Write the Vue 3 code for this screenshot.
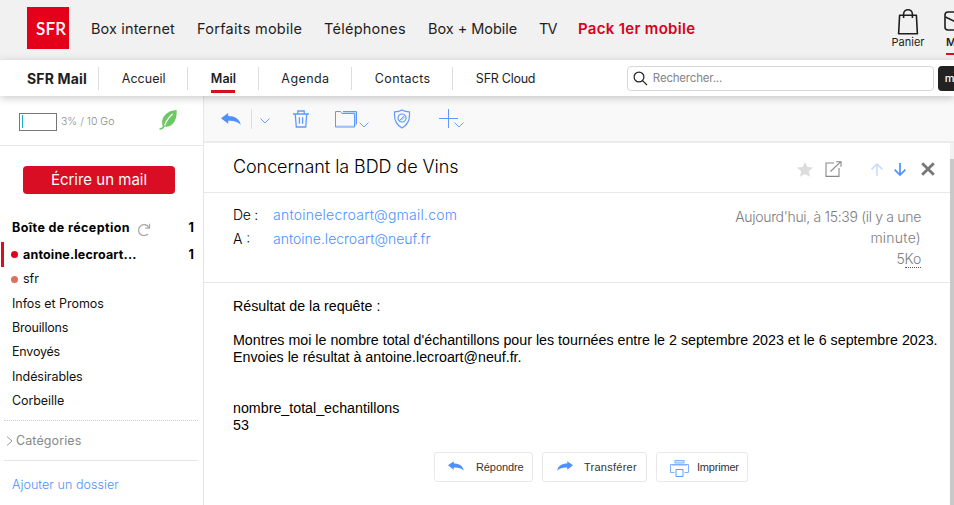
<script setup>
const shopLinks = [
  { label: 'Box internet', cls: 'w-box' },
  { label: 'Forfaits mobile', cls: 'w-forfaits' },
  { label: 'Téléphones', cls: 'w-tel' },
  { label: 'Box + Mobile', cls: 'w-boxmob' },
  { label: 'TV', cls: 'w-tv' },
  { label: 'Pack 1er mobile', cls: 'w-pack' },
]
const tabs = [
  { label: 'Accueil', cls: 't-accueil' },
  { label: 'Mail', cls: 't-mail' },
  { label: 'Agenda', cls: 't-agenda' },
  { label: 'Contacts', cls: 't-contacts' },
  { label: 'SFR Cloud', cls: 't-cloud' },
]
const folders = [
  { label: 'Infos et Promos', cls: 'f-infos' },
  { label: 'Brouillons', cls: 'f-brouillons' },
  { label: 'Envoyés', cls: 'f-envoyes' },
  { label: 'Indésirables', cls: 'f-indes' },
  { label: 'Corbeille', cls: 'f-corbeille' },
]
</script>

<template>
  <div class="page">
    <header class="shop">
      <div class="logo"><span>SFR</span></div>
      <nav class="shop-nav">
        <a v-for="l in shopLinks" :key="l.label" :class="l.cls"><span>{{ l.label }}</span></a>
      </nav>
      <div class="account">
        <div class="cart">
          <svg width="22" height="28" viewBox="0 0 22 28" fill="none" stroke="#1e1e1e" stroke-width="1.6" stroke-linejoin="round">
            <path d="M2.6 7.2h16.8l1 18.6H1.6z" />
            <path d="M6.6 10V6.200c0-6 8.800-6 8.800 0V10" />
          </svg>
          <span>Panier</span>
        </div>
        <div class="mails">
          <svg width="26" height="20" viewBox="0 0 26 20" fill="none" stroke="#1e1e1e" stroke-width="1.6">
            <rect x="1" y="1" width="24" height="18" rx="3" />
            <path d="M1.500 6l11.500 5.500L24.500 6" />
          </svg>
          <span>M</span>
        </div>
      </div>
    </header>

    <div class="tabs">
      <b class="brand"><span>SFR Mail</span></b>
      <div v-for="t in tabs" :key="t.label" class="tab" :class="t.cls"><span>{{ t.label }}</span></div>
      <div class="search">
        <svg width="15" height="15" viewBox="0 0 15 15" fill="none" stroke="#222" stroke-width="1.200">
          <circle cx="6" cy="6" r="4.900" /><path d="M9.600 9.600L14 14" />
        </svg>
        <span>Rechercher...</span>
      </div>
      <div class="search-go">m</div>
    </div>

    <div class="body">
      <aside class="side">
        <div class="quota">
          <div class="gauge"><i></i></div>
          <span>3% / 10 Go</span>
          <svg width="19" height="21" viewBox="0 0 19 21">
            <path d="M3.600 17.200C1 9 7.500 1.500 17.600 1c.8 8.500-3 17.500-11.600 16.600z" fill="#6cc864" />
            <path d="M1 20c3 0 3.500-2 5-4" fill="none" stroke="#6cc864" stroke-width="1.500" stroke-linecap="round" />
            <path d="M5.500 16.500c2-5 4.500-8.500 8.200-11.500" fill="none" stroke="#fff" stroke-width="1.100" />
          </svg>
        </div>
        <div class="compose"><span>Écrire un mail</span></div>
        <div class="row inbox">
          <b>Boîte de réception</b>
          <svg width="14" height="14" viewBox="0 0 14 14" fill="none" stroke="#aaa" stroke-width="1.300">
            <path d="M11 11A5.500 5.500 0 1 1 11.800 4.300M12.500.8v4.300H8.200" />
          </svg>
          <b class="count">1</b>
        </div>
        <div class="row current"><i class="dot"></i><b>antoine.lecroart...</b><b class="count">1</b></div>
        <div class="row sfr"><i class="dot"></i><span>sfr</span></div>
        <div v-for="f in folders" :key="f.label" class="row folder" :class="f.cls"><span>{{ f.label }}</span></div>
        <div class="cats">
          <svg width="7" height="10" viewBox="0 0 7 10" fill="none" stroke="#999" stroke-width="1"><path d="M1 .5l5 4.500-5 4.500" /></svg>
          <span>Catégories</span>
        </div>
        <a class="add">Ajouter un dossier</a>
      </aside>

      <main class="main">
        <div class="toolbar">
          <svg class="i-reply" width="20" height="12" viewBox="0 0 20 12"><path d="M0 5.200L7.200 0v3C14 3 18.500 6 19.800 11.800 16.500 8.400 12.500 7.500 7.200 7.800v2.900z" fill="#4d90fe" /></svg>
          <i class="bar"></i>
          <svg class="i-chev" width="10" height="6" viewBox="0 0 10 6" fill="none" stroke="#6ca4fb"><path d="M.5.5L5 5 9.500.5" /></svg>
          <svg class="i-trash" width="16" height="18" viewBox="0 0 16 18" fill="none" stroke="#5e9afd" stroke-width="1.300">
            <path d="M0 4h16M4.800 3.500V1h6.400v2.500M2.300 4.500l1 12.500h9.400l1-12.500M6.400 7.300v6.400M9.600 7.300v6.400" />
          </svg>
          <svg class="i-folder" width="24" height="18" viewBox="0 0 24 18" fill="none" stroke="#5e9afd">
            <path d="M.5 17V1.500h5l1.500 2h12.500V17z" /><path d="M8 1.500h13.500v13" /><path d="M8 2.500h13M20.500 3v13M1 16h18" opacity=".4" />
          </svg>
          <svg class="i-chev2" width="10" height="6" viewBox="0 0 10 6" fill="none" stroke="#6ca4fb"><path d="M.5.5L5 5 9.500.5" /></svg>
          <svg class="i-shield" width="18" height="20" viewBox="0 0 18 20" fill="none" stroke="#5e9afd" stroke-width="1.200">
            <path d="M9 1c2.500 1.500 4.800 1.900 7.400 1.900C17.200 11 15 16 9 19 3 16 .8 11 1.600 2.900 4.200 2.900 6.500 2.500 9 1z" />
            <circle cx="9" cy="9" r="4" /><path d="M6.300 11.700l5.400-5.400M8 11.500l3.500-3.500" stroke-width=".9" />
          </svg>
          <svg class="i-plus" width="19" height="20" viewBox="0 0 19 20" fill="none" stroke="#5e9afd"><path d="M0 9.500h19M9.500 0v19" /></svg>
          <svg class="i-chev3" width="10" height="6" viewBox="0 0 10 6" fill="none" stroke="#6ca4fb"><path d="M.5.5L5 5 9.500.5" /></svg>
        </div>

        <div class="reader">
          <section class="message">
            <div class="subject">
              <h1>Concernant la BDD de Vins</h1>
              <div class="actions">
                <svg width="16" height="15" viewBox="0 0 16 15"><path d="M8 0l2.300 5 5.700.6-4.200 3.700L13 14.800 8 12l-5 2.800 1.200-5.500L0 5.600 5.700 5z" fill="#dcdcdc" /></svg>
                <svg class="i-open" width="17" height="16" viewBox="0 0 17 16" fill="none" stroke="#888" stroke-width="1.100"><path d="M9 2H1v13.400h13V7M5.500 10.500L15.500.8M11 .7h5v5" /></svg>
                <svg class="i-up" width="12" height="13" viewBox="0 0 12 13" fill="none" stroke="#c6dcff" stroke-width="1.500"><path d="M6 13V1M.6 6.400L6 1l5.400 5.400" /></svg>
                <svg class="i-down" width="12" height="13" viewBox="0 0 12 13" fill="none" stroke="#4d90fe" stroke-width="1.700"><path d="M6 0v12M.6 6.600L6 12l5.400-5.400" /></svg>
                <svg class="i-close" width="14" height="14" viewBox="0 0 14 14" fill="none" stroke="#777" stroke-width="2.800"><path d="M1.200 1.200l11.600 11.600M12.800 1.200L1.200 12.800" /></svg>
              </div>
            </div>
            <div class="meta">
              <dl>
                <dt class="de">De :</dt><dd class="from">antoinelecroart@gmail.com</dd>
                <dt>A :</dt><dd class="to">antoine.lecroart@neuf.fr</dd>
              </dl>
              <div class="date">
                <div class="d1">Aujourd'hui, à 15:39 (il y a une</div>
                <div class="d2">minute)</div>
                <div class="d3">5<span>Ko</span></div>
              </div>
            </div>
            <div class="text">Résultat de la requête :<br><br>Montres moi le nombre total d'échantillons pour les tournées entre le 2 septembre 2023 et le 6 septembre 2023.<br>Envoies le résultat à antoine.lecroart@neuf.fr.<br><br><br>nombre_total_echantillons<br>53</div>
            <div class="replies">
              <button class="b1">
                <svg width="16" height="10" viewBox="0 0 20 12"><path d="M0 5.200L7.200 0v3C14 3 18.500 6 19.800 11.800 16.500 8.400 12.500 7.500 7.200 7.800v2.900z" fill="#4d90fe" /></svg>
                <span>Répondre</span>
              </button>
              <button class="b2">
                <svg width="16" height="10" viewBox="0 0 20 12"><path d="M20 5.200L12.800 0v3C6 3 1.500 6 .2 11.800 3.500 8.400 7.500 7.500 12.800 7.800v2.900z" fill="#4d90fe" /></svg>
                <span>Transférer</span>
              </button>
              <button class="b3">
                <svg width="19" height="17" viewBox="0 0 19 17" fill="none" stroke="#80b0ff">
                  <rect x="5" y=".5" width="9" height="2.500" fill="#d5e5ff" /><path d="M4.500 12.500H.5v-8h18v8h-4" />
                  <path d="M2 5.500h15" stroke="#bcd5ff" /><path d="M6 9.500h7v7H6z" fill="#fff" stroke="#5e9afd" />
                </svg>
                <span>Imprimer</span>
              </button>
            </div>
          </section>
          <div class="scroll"><i></i></div>
        </div>
      </main>
    </div>
  </div>
</template>

<style>
body { margin: 0; overflow: hidden; }
</style>

<style scoped>
* { box-sizing: border-box; }
.page { width: 954px; height: 505px; overflow: hidden; display: flex; flex-direction: column; background: #fff; font-family: Inter, "Open Sans", sans-serif; color: #1e1e1e; white-space: nowrap; }
svg { display: block; flex: none; }
.shop { height: 60px; flex: none; background: #f1f1f1; display: flex; align-items: flex-start; padding-left: 27px; }
.logo { width: 42px; height: 42px; margin-top: 7px; flex: none; background: #e4001b; color: #fff; font: 600 17px/43px Lato, sans-serif; padding-left: 9px; letter-spacing: .2px; }
.shop-nav { display: flex; gap: 22px; margin-left: 22px; font-size: 14.500px; line-height: 58px; }
.shop-nav a { flex: none; }
.w-box { width: 84px; letter-spacing: .12px; }
.w-forfaits { width: 105px; letter-spacing: .27px; }
.w-tel { width: 82px; letter-spacing: .25px; }
.w-boxmob { width: 89px; letter-spacing: -.05px; }
.w-tv { width: 17px; letter-spacing: -.8px; }
.w-pack { width: 117px; color: #d9001f; font-size: 15px; font-weight: 600; letter-spacing: .3px; }
.account { display: flex; margin-left: 196px; font-size: 11px; line-height: 14px; }
.cart { width: 34px; display: flex; flex-direction: column; align-items: center; padding-top: 8px; }
.cart span { margin-top: -1px; }
.mails { margin-left: 19px; padding-top: 11px; width: 11px; flex: none; font-weight: 600; }
.mails svg { margin-right: -20px; }
.mails span { display: block; margin: 4px 0 0 2px; border-bottom: 2px solid #d90d24; height: 20px; line-height: 14px; }
.tabs { height: 36px; flex: none; display: flex; align-items: center; padding-left: 27px; background: #fff; box-shadow: 0 2px 8px rgba(0, 0, 0, .22); position: relative; font-size: 12.500px; }
.brand { width: 60px; margin-right: 11px; font-size: 14px; letter-spacing: .15px; }
.tab { height: 23px; line-height: 23px; border-left: 1px solid #ddd; padding-left: 23px; flex: none; }
.t-accueil { width: 89px; }
.t-mail { width: 71px; font-weight: 600; }
.t-mail span { display: block; width: 24px; height: 26px; border-bottom: 3px solid #d90d24; }
.t-agenda { width: 93px; padding-left: 22.500px; letter-spacing: .4px; }
.t-contacts { width: 101px; letter-spacing: .35px; }
.t-cloud { width: 175px; letter-spacing: -.25px; }
.search { width: 307px; height: 25px; border: 1px solid #d8d8d8; border-radius: 4px; display: flex; align-items: center; gap: 5px; padding-left: 5px; color: #858585; font-size: 11.500px; letter-spacing: -.2px; flex: none; }
.search-go { margin-left: 4px; width: 20px; height: 25px; line-height: 24px; flex: none; background: #222; color: #fff; font-size: 11px; font-weight: 500; border-radius: 4px; padding-left: 7px; }
.body { flex: 1; display: flex; min-height: 0; }
.side { width: 204px; flex: none; border-right: 1px solid #e6e6e6; font-size: 12.500px; }
.quota { height: 50px; border-bottom: 1px solid #e8e8e8; display: flex; align-items: center; padding-left: 19px; color: #8c8c8c; font-size: 10.500px; font-weight: 300; }
.gauge { width: 38px; height: 18px; border: 1px solid #777; margin: 2px 4px 0 0; padding: 1px 2px; flex: none; }
.gauge i { display: block; width: 1px; height: 13px; background: #16b3b8; }
.quota span { width: 98px; padding-top: 1px; }
.quota svg { margin-top: -2px; }
.compose { width: 152px; height: 28px; margin: 20px 0 20px 23px; background: #d90d24; color: #fff; border-radius: 4px; text-align: center; font-size: 15px; line-height: 28px; }
.row { height: 24.400px; line-height: 24px; padding-left: 12px; display: flex; align-items: center; color: #111; }
.row b { font-weight: 700; color: #000; }
.inbox { height: 28px; }
.inbox b { letter-spacing: .4px; }
.inbox svg { margin: 4px 0 0 7px; }
.row .count { margin-left: auto; margin-right: 9px; letter-spacing: 0; }
.current { height: 25px; border-left: 3px solid #d90d24; margin-left: 1px; padding-left: 7px; letter-spacing: .17px; }
.f-brouillons, .f-envoyes { letter-spacing: -.2px; }
.f-infos { letter-spacing: -.05px; }
.f-indes, .f-corbeille { letter-spacing: -.08px; }
.dot { width: 7px; height: 7px; border-radius: 50%; background: #e4001b; margin-right: 5px; flex: none; }
.sfr .dot { background: #d9735b; margin-left: -1px; }
.cats { height: 41px; margin: 7px 5px 0 4px; border-top: 1px dotted #ccc; border-bottom: 1px solid #e6e6e6; display: flex; align-items: center; gap: 3px; padding-left: 2px; color: #888; letter-spacing: .1px; }
.add { display: block; padding-left: 12px; line-height: 48px; color: #4d90fe; font-weight: 300; letter-spacing: .06px; }
.main { flex: 1; display: flex; flex-direction: column; min-width: 0; }
.toolbar { height: 47px; flex: none; background: #f9f9f9; border-bottom: 2px solid #ececec; display: flex; align-items: center; padding-left: 17px; }
.bar { width: 1px; height: 20px; background: #ddd; margin: 0 8px 0 10px; }
.i-chev { margin-top: 4px; }
.i-trash { margin-left: 23px; }
.i-folder { margin-left: 26px; }
.i-chev2, .i-chev3 { margin: 13px 0 0 0; }
.i-shield { margin-left: 24px; }
.i-plus { margin-left: 28px; }
.i-chev3 { margin-left: -4px; }
.reader { flex: 1; display: flex; min-height: 0; }
.message { width: 746px; flex: none; }
.scroll { width: 4px; background: #f1f1f1; padding-top: 16px; }
.scroll i { display: block; height: 100%; background: #c9c9c9; }
.subject { height: 50px; border-bottom: 1px solid #e8e8e8; display: flex; align-items: center; justify-content: space-between; padding: 0 15px 0 29px; }
h1 { margin: 0; font-size: 18px; font-weight: 300; color: #000; line-height: 48px; height: 49px; letter-spacing: -.08px; }
.actions { display: flex; align-items: center; padding-top: 3px; }
.i-open { margin-left: 12px; }
.i-up { margin-left: 29px; }
.i-down { margin-left: 11px; }
.i-close { margin-left: 15px; }
.meta { height: 90px; border-bottom: 1px solid #e8e8e8; display: flex; justify-content: space-between; padding: 10px 29px 0 29px; font-size: 14px; }
dl { margin: 0; display: grid; grid-template-columns: 40px auto; grid-auto-rows: 24px; line-height: 24px; align-content: start; font-weight: 300; color: #000; }
dd { margin: 0; color: #4d90fe; }
.de { letter-spacing: -.3px; }
.from { letter-spacing: .24px; }
.date { text-align: right; line-height: 21px; color: #7c7c7c; font-weight: 300; padding-top: 3px; }
.d1 { letter-spacing: -.32px; }
.d2 { letter-spacing: .25px; }
.d3 { letter-spacing: -.2px; }
.d3 span { border-bottom: 1px dotted #555; }
.text { padding: 15px 0 0 29px; font: 14.250px/17px "Liberation Sans", Arial, sans-serif; color: #000; }
.replies { display: flex; gap: 9px; margin: 18px 0 0 230px; }
button { height: 30px; background: #fff; border: 1px solid #e8e8e8; border-radius: 3px; display: flex; align-items: center; padding: 0; font: 11px "Liberation Sans", Arial, sans-serif; color: #333; }
button svg { margin-top: -2px; }
.b1 { width: 99px; padding-left: 13px; gap: 12px; letter-spacing: -.1px; }
.b2 { width: 105px; padding-left: 14px; gap: 11px; letter-spacing: .25px; }
.b3 { width: 92px; padding-left: 13px; gap: 8px; letter-spacing: -.2px; }
.b3 svg { margin-top: 2px; }
</style>
